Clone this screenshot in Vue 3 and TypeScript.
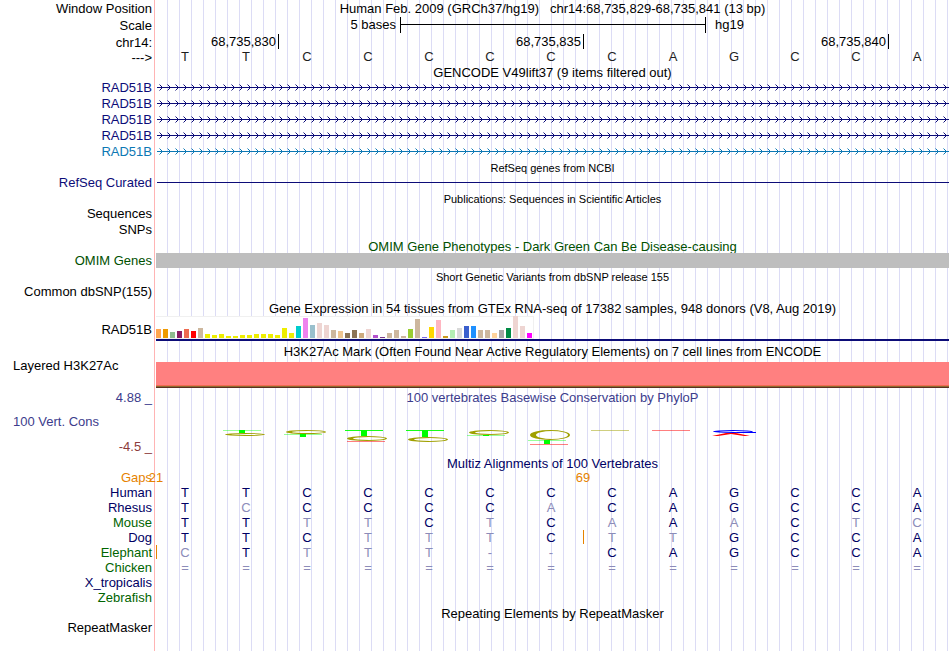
<script setup lang="ts">
interface Mark {
  base: number
  kind: 'ring' | 'tee' | 'flat' | 'peak'
  y: number
  h: number
  tone: string
}

interface Species {
  name: string
  tone: 'navy' | 'green'
  bases: string
  gapAt?: number
}

const baseCount = 13
const reference = 'TTCCCCCCAGCCA'

const at = (base: number): string => `${(base / baseCount) * 100}%`

const positions = [
  { base: 2, text: '68,735,830' },
  { base: 7, text: '68,735,835' },
  { base: 12, text: '68,735,840' },
]

const transcripts = ['coding', 'coding', 'coding', 'coding', 'noncoding']

const tissues: [number, string][] = [
  [9, '#ffa54f'], [9, '#ee9a00'], [6, '#8fbc8f'], [7, '#8b1c62'], [9, '#ee6a50'], [7, '#ff0000'],
  [10, '#cdb79e'], [4, '#eeee00'], [3, '#eeee00'], [4, '#eeee00'], [2, '#eeee00'], [2, '#eeee00'],
  [3, '#eeee00'], [3, '#eeee00'], [4, '#eeee00'], [4, '#eeee00'], [4, '#eeee00'], [3, '#eeee00'],
  [10, '#eeee00'], [5, '#eeee00'], [12, '#00cdcd'], [20, '#ee82ee'], [13, '#9ac0cd'], [15, '#eed5d2'],
  [13, '#eed5d2'], [8, '#cdb79e'], [7, '#eec591'], [5, '#8b7355'], [8, '#8b7355'], [5, '#cdaa7d'],
  [9, '#eed5d2'], [3, '#b452cd'], [1, '#7a378b'], [5, '#cdb79e'], [8, '#cdb79e'], [2, '#cdb79e'],
  [9, '#9acd32'], [19, '#cdb79e'], [1, '#7a67ee'], [11, '#ffd700'], [18, '#ffb6c1'], [2, '#cd9b1d'],
  [8, '#b4eeb4'], [10, '#d9d9d9'], [12, '#3a5fcd'], [12, '#1e90ff'], [8, '#cdb79e'], [8, '#cdb79e'],
  [5, '#ffd39b'], [8, '#a6a6a6'], [10, '#008b45'], [22, '#eed5d2'], [12, '#eed5d2'], [5, '#ff00ff'],
]

const olive = '#a0a000'
const lime = '#00ff00'
const red = '#ff0000'
const blue = '#0000ff'

// Conservation marks; y and h are in the 52-unit tall drawing below.
const marks: Mark[] = [
  { base: 1, kind: 'tee', y: 26, h: 3, tone: lime },
  { base: 1, kind: 'ring', y: 29, h: 3, tone: olive },
  { base: 2, kind: 'ring', y: 26, h: 4, tone: olive },
  { base: 2, kind: 'tee', y: 30, h: 3, tone: lime },
  { base: 3, kind: 'tee', y: 26, h: 6, tone: lime },
  { base: 3, kind: 'ring', y: 32, h: 5, tone: olive },
  { base: 3, kind: 'flat', y: 37, h: 1, tone: red },
  { base: 4, kind: 'tee', y: 26, h: 7, tone: lime },
  { base: 4, kind: 'ring', y: 33, h: 5, tone: olive },
  { base: 5, kind: 'ring', y: 26, h: 5, tone: olive },
  { base: 5, kind: 'tee', y: 31, h: 1, tone: lime },
  { base: 6, kind: 'ring', y: 26, h: 10, tone: olive },
  { base: 6, kind: 'tee', y: 36, h: 4, tone: lime },
  { base: 6, kind: 'flat', y: 40, h: 1, tone: red },
  { base: 7, kind: 'flat', y: 26, h: 1, tone: olive },
  { base: 8, kind: 'flat', y: 26, h: 1, tone: red },
  { base: 9, kind: 'ring', y: 26, h: 3, tone: blue },
  { base: 9, kind: 'peak', y: 29, h: 3, tone: red },
]

// Outer ellipse minus an inner one: heavy on the left, tapering to an opening on the right.
function ring(m: Mark): string {
  const x = m.base * 61 + 8
  const mid = m.y + m.h / 2
  const ry = m.h / 2
  const inner = Math.max(ry - 1, 0.4)
  return (
    `M${x} ${mid}a20 ${ry} 0 1 1 40 0a20 ${ry} 0 1 1 -40 0z` +
    `M${x + 6} ${mid}a16 ${inner} 0 1 1 32 0a16 ${inner} 0 1 1 -32 0z`
  )
}

const species: Species[] = [
  { name: 'Human', tone: 'navy', bases: 'TTCCCCCCAGCCA' },
  { name: 'Rhesus', tone: 'navy', bases: 'TCCCCCACAGCCA' },
  { name: 'Mouse', tone: 'green', bases: 'TTTTCTCAAACTC' },
  { name: 'Dog', tone: 'navy', bases: 'TTCTTTCTTGCCA', gapAt: 7 },
  { name: 'Elephant', tone: 'green', bases: 'CTTTT--CAGCCA', gapAt: 0 },
  { name: 'Chicken', tone: 'green', bases: '=============' },
  { name: 'X_tropicalis', tone: 'navy', bases: '             ' },
  { name: 'Zebrafish', tone: 'green', bases: '             ' },
]

const gaps: Record<number, string> = { 0: '21', 7: '69' }
</script>

<template>
  <main class="browser">
    <section class="ruler">
      <div class="row h16">
        <span class="label low-set">Window Position</span>
        <h1 class="title position">Human Feb. 2009 (GRCh37/hg19)&nbsp;&nbsp; chr14:68,735,829-68,735,841 (13 bp)</h1>
      </div>
      <div class="row h17">
        <span class="label low-set">Scale</span>
        <div class="track">
          <span class="before" :style="{ right: at(9) }">5 bases</span>
          <span class="scale-bar" :style="{ left: at(4), right: at(4) }"></span>
          <span class="after" :style="{ left: at(9) }">hg19</span>
        </div>
      </div>
      <div class="row h17">
        <span class="label low-set">chr14:</span>
        <div class="track">
          <template v-for="p in positions" :key="p.base">
            <span class="before coordinate" :style="{ right: at(baseCount - p.base) }">{{ p.text }}</span>
            <span class="tick" :style="{ left: at(p.base) }"></span>
          </template>
        </div>
      </div>
      <div class="row h15">
        <span class="label">---&gt;</span>
        <div class="track bases">
          <span v-for="(b, i) in reference" :key="i" class="base">{{ b }}</span>
        </div>
      </div>
    </section>

    <section class="group">
      <h2 class="title">GENCODE V49lift37 (9 items filtered out)</h2>
      <div v-for="(kind, i) in transcripts" :key="i" class="row h16" :class="kind">
        <span class="label low-set">RAD51B</span>
        <svg class="track intron" aria-hidden="true">
          <defs>
            <pattern :id="'strand' + i" width="8" height="16" patternUnits="userSpaceOnUse">
              <path d="M3.5 5.5l3 3l-3 3" fill="none" stroke="currentColor" stroke-width="1" />
            </pattern>
          </defs>
          <rect x="1" y="8" width="100%" height="1" fill="currentColor" />
          <rect width="100%" height="16" :fill="`url(#strand${i})`" />
        </svg>
      </div>
    </section>

    <section class="group gap2">
      <h2 class="title small">RefSeq genes from NCBI</h2>
      <div class="row h15 coding">
        <span class="label">RefSeq Curated</span>
        <div class="track"><span class="line"></span></div>
      </div>
    </section>

    <section class="group gap2">
      <h2 class="title small">Publications: Sequences in Scientific Articles</h2>
      <div class="row h16"><span class="label">Sequences</span></div>
      <div class="row h16"><span class="label">SNPs</span></div>
    </section>

    <section class="group gap1 omim">
      <h2 class="title">OMIM Gene Phenotypes - Dark Green Can Be Disease-causing</h2>
      <div class="row h15">
        <span class="label">OMIM Genes</span>
        <div class="track gene-block"></div>
      </div>
    </section>

    <section class="group gap2">
      <h2 class="title small">Short Genetic Variants from dbSNP release 155</h2>
      <div class="row h15"><span class="label">Common dbSNP(155)</span></div>
    </section>

    <section class="group gap2 gtex">
      <h2 class="title">Gene Expression in 54 tissues from GTEx RNA-seq of 17382 samples, 948 donors (V8, Aug 2019)</h2>
      <div class="row">
        <span class="label low-set">RAD51B</span>
        <div class="track expression">
          <div class="chart">
            <span
              v-for="(t, i) in tissues"
              :key="i"
              class="tissue"
              :style="{ height: t[0] + 'px', background: t[1] }"
            ></span>
          </div>
        </div>
      </div>
    </section>

    <section class="group gap3">
      <h2 class="title">H3K27Ac Mark (Often Found Near Active Regulatory Elements) on 7 cell lines from ENCODE</h2>
      <div class="row top">
        <span class="label start">Layered H3K27Ac</span>
        <div class="track signal"></div>
      </div>
    </section>

    <section class="group gap2 conservation">
      <div class="row h14">
        <span class="label low-set">4.88 _</span>
        <h2 class="title position">100 vertebrates Basewise Conservation by PhyloP</h2>
      </div>
      <div class="row">
        <div class="axis">
          <span class="label start">100 Vert. Cons</span>
          <span class="label low">-4.5 _</span>
        </div>
        <svg class="track logo" viewBox="0 0 793 52" preserveAspectRatio="none" aria-hidden="true">
          <g v-for="(m, i) in marks" :key="i" :fill="m.tone">
            <path v-if="m.kind === 'ring'" :d="ring(m)" fill-rule="evenodd" />
            <template v-else-if="m.kind === 'tee'">
              <rect :x="m.base * 61 + 6" :y="m.y" width="38" height="1" :opacity="m.h > 5 ? 0.9 : 0.4" />
              <rect :x="m.base * 61 + 22" :y="m.y" width="6" :height="m.h" />
            </template>
            <rect v-else-if="m.kind === 'flat'" :x="m.base * 61 + 8" :y="m.y" width="38" height="1" opacity="0.5" />
            <path v-else :d="`M${m.base * 61 + 7} 32l14 -3h10l14 3h-6l-13 -2l-13 2z`" />
          </g>
          <rect x="581" y="28" width="19" height="1" :fill="blue" />
        </svg>
      </div>
    </section>

    <section class="group alignment">
      <h2 class="title">Multiz Alignments of 100 Vertebrates</h2>
      <table>
        <tbody>
          <tr class="gaps">
            <th scope="row">Gaps</th>
            <td v-for="n in baseCount" :key="n">
              <span v-if="gaps[n - 1]" class="gap-size">{{ gaps[n - 1] }}</span>
            </td>
          </tr>
          <tr v-for="s in species" :key="s.name">
            <th scope="row" :class="s.tone">{{ s.name }}</th>
            <td v-for="(b, i) in s.bases" :key="i" :class="{ differs: b !== reference[i] }">
              <span v-if="s.gapAt === i" class="gap-mark"></span>{{ b }}
            </td>
          </tr>
        </tbody>
      </table>
    </section>

    <section class="group gap1">
      <h2 class="title">Repeating Elements by RepeatMasker</h2>
      <div class="row h15"><span class="label">RepeatMasker</span></div>
    </section>
  </main>
</template>

<style>
body {
  margin: 0;
  background: #fff;
}
</style>

<style scoped>
.browser {
  --side: 156px;
  box-sizing: border-box;
  padding: 0 1px 16px 0;
  font: 13px/14px "Liberation Sans", Arial, sans-serif;
  color: #000;
  background:
    linear-gradient(#ffb4b4, #ffb4b4) 154px 0 / 1px 100% no-repeat,
    repeating-linear-gradient(to right, transparent 0 11px, #dcdcf5 11px 12px) var(--side) 0 / 100% 100% no-repeat;
}
.row {
  display: flex;
  align-items: center;
}
.row.top { align-items: flex-start; }
.h14 { height: 14px; }
.h15 { height: 15px; }
.h16 { height: 16px; }
.h17 { height: 17px; }
.gap1 { padding-top: 1px; }
.gap2 { padding-top: 2px; }
.gap3 { padding-top: 3px; }
.label {
  flex: none;
  box-sizing: border-box;
  width: var(--side);
  padding-right: 4px;
  text-align: right;
  white-space: nowrap;
}
.label.low-set { padding-top: 2px; }
.label.start {
  padding-top: 1px;
  padding-left: 13px;
  text-align: left;
}
.title {
  height: 14px;
  margin: 0 0 0 var(--side);
  font-size: 13px;
  font-weight: 400;
  line-height: 16px;
  text-align: center;
  white-space: nowrap;
}
.title.small {
  font-size: 11px;
  line-height: 14px;
}
.title.position {
  flex: 1;
  margin-left: 0;
}
.track {
  position: relative;
  flex: 1;
  min-width: 0;
  align-self: stretch;
}
.before,
.after {
  position: absolute;
  top: 2px;
  white-space: nowrap;
}
.before { padding-right: 4px; }
.before.coordinate { padding-right: 2px; }
.after { padding-left: 10px; }
.scale-bar {
  position: absolute;
  top: 1px;
  height: 16px;
  margin-right: -1px;
  box-sizing: border-box;
  border: solid #000;
  border-width: 0 1px;
  background: linear-gradient(#000, #000) 0 7px / 100% 1px no-repeat;
}
.tick {
  position: absolute;
  top: 1px;
  width: 1px;
  height: 15px;
  background: #000;
}
.bases {
  display: grid;
  grid-template-columns: repeat(13, 1fr);
}
.base {
  padding-right: 3px;
  text-align: center;
  color: #1e1e1e;
}
.coding { color: #0c0c78; }
.noncoding { color: #0c78b4; }
.intron {
  display: block;
  height: 16px;
}
.line {
  display: block;
  height: 1px;
  margin: 7px 0 0 1px;
  background: currentColor;
}
.omim { color: #005000; }
.gene-block { background: #bebebe; }
.gtex .title { margin-bottom: 1px; }
.expression { border-bottom: 2px solid #0c0c78; }
.chart {
  display: flex;
  align-items: flex-end;
  gap: 2px;
  box-sizing: border-box;
  width: 378px;
  height: 23px;
  background: #fff;
  border: solid #f0f0f0;
  border-width: 0 1px 1px 0;
  box-shadow: inset 0 1px #f0f0f0;
}
.tissue {
  flex: none;
  width: 5px;
}
.signal {
  height: 23px;
  margin-top: 4px;
  background: #ff8080;
  border-bottom: 1px solid #5a3020;
  box-shadow: inset 0 -1px #8c6a30, inset 0 -2px #f06a50;
  padding-bottom: 2px;
}
.conservation { color: #3c3c8c; }
.axis {
  display: flex;
  flex-direction: column;
  justify-content: space-between;
  box-sizing: border-box;
  height: 52px;
  padding: 10px 0 2px;
}
.low { color: #8c3c3c; }
.logo {
  display: block;
  height: 52px;
}
.alignment .title { color: #000064; }
table {
  width: 100%;
  table-layout: fixed;
  border-collapse: collapse;
}
th,
td {
  height: 15px;
  padding: 0;
  font-weight: 400;
  line-height: 15px;
}
th {
  box-sizing: border-box;
  width: var(--side);
  padding-right: 4px;
  text-align: right;
}
td {
  position: relative;
  padding-right: 3px;
  text-align: center;
  color: #000064;
}
.navy { color: #000064; }
.green { color: #006400; }
td.differs { color: #8c8cb9; }
.gaps th,
.gap-size { color: #e68200; }
.gap-size {
  position: absolute;
  top: 0;
  left: 0;
  transform: translateX(-50%);
}
.gap-mark {
  position: absolute;
  top: 0;
  left: 0;
  width: 1px;
  height: 14px;
  background: #e68200;
}
</style>
